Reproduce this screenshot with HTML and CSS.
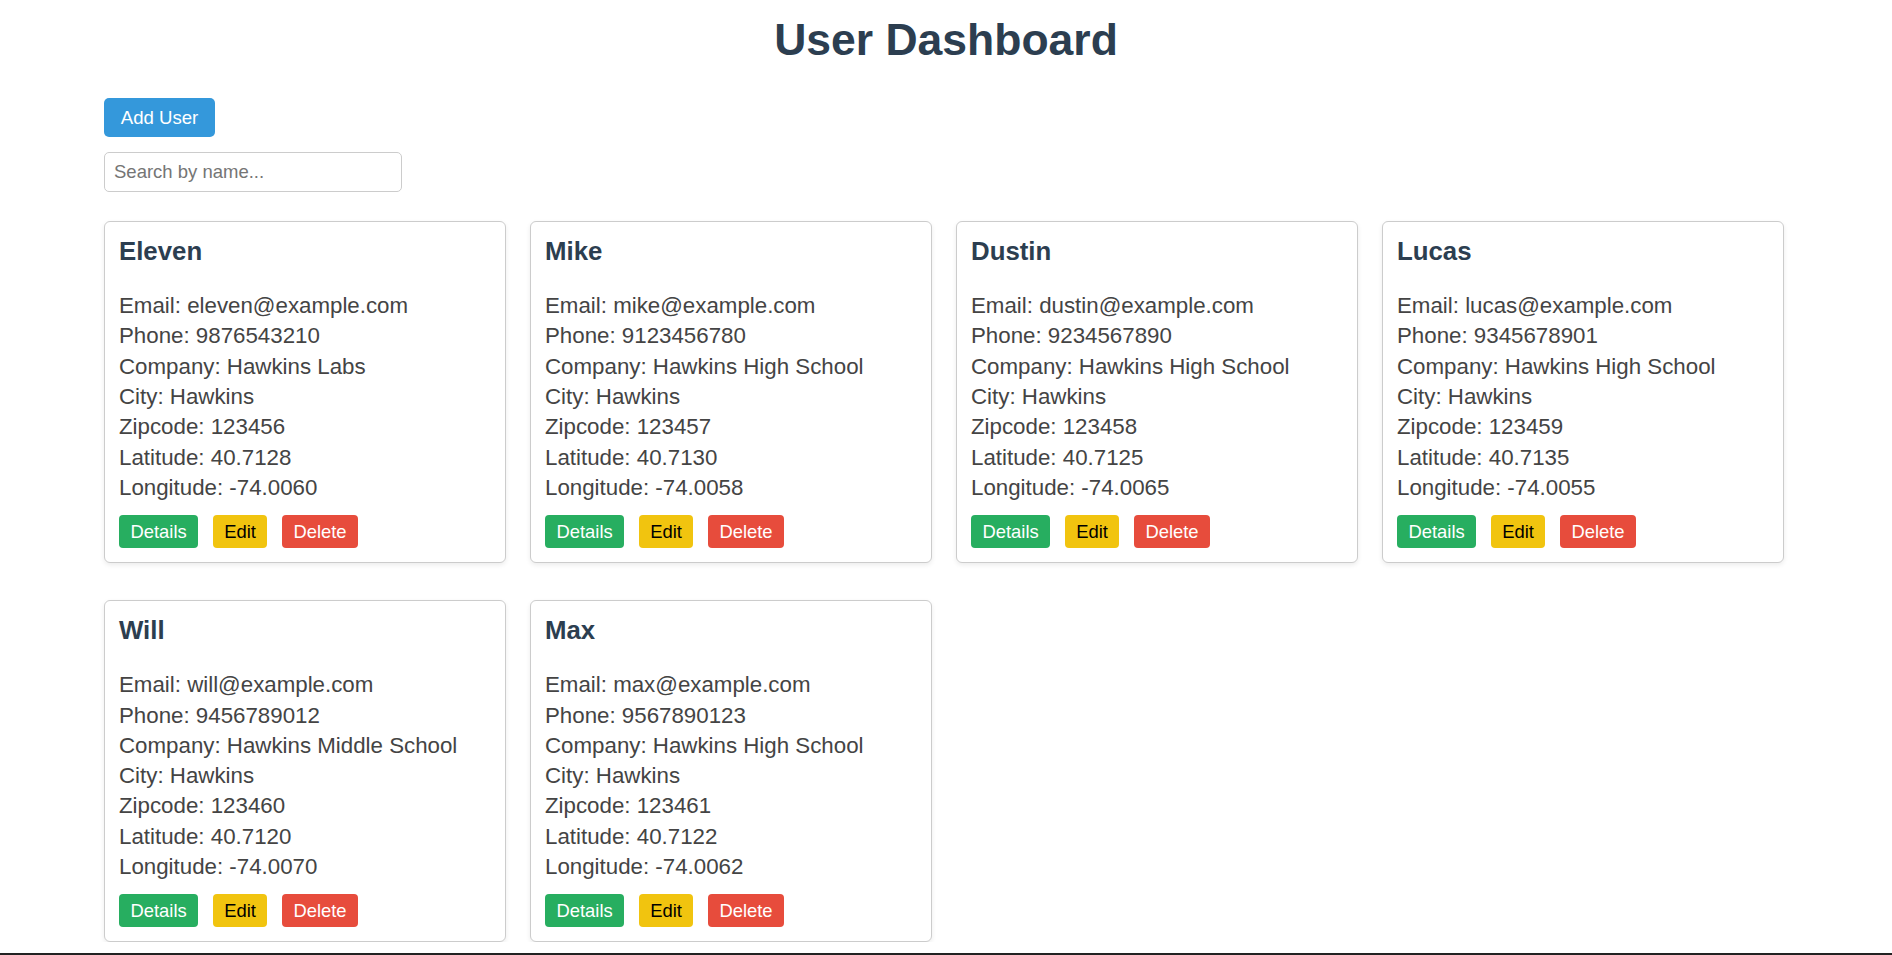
FILE: index.html
```html
<!DOCTYPE html>
<html lang="en">
<head>
<meta charset="utf-8">
<title>User Dashboard</title>
<link rel="stylesheet" href="styles.css">
</head>
<body>
<div class="page">
  <h1 class="title">User Dashboard</h1>
  <div class="toolbar">
    <button class="btn-add">Add User</button>
    <input class="search" type="text" placeholder="Search by name...">
  </div>
  <div class="cards">
    <div class="card">
      <h3 class="card-name">Eleven</h3>
      <div class="card-info">
        <p>Email: eleven@example.com</p>
        <p>Phone: 9876543210</p>
        <p>Company: Hawkins Labs</p>
        <p>City: Hawkins</p>
        <p>Zipcode: 123456</p>
        <p>Latitude: 40.7128</p>
        <p>Longitude: -74.0060</p>
      </div>
      <div class="actions">
        <button class="btn btn-details">Details</button>
        <button class="btn btn-edit">Edit</button>
        <button class="btn btn-delete">Delete</button>
      </div>
    </div>
    <div class="card">
      <h3 class="card-name">Mike</h3>
      <div class="card-info">
        <p>Email: mike@example.com</p>
        <p>Phone: 9123456780</p>
        <p>Company: Hawkins High School</p>
        <p>City: Hawkins</p>
        <p>Zipcode: 123457</p>
        <p>Latitude: 40.7130</p>
        <p>Longitude: -74.0058</p>
      </div>
      <div class="actions">
        <button class="btn btn-details">Details</button>
        <button class="btn btn-edit">Edit</button>
        <button class="btn btn-delete">Delete</button>
      </div>
    </div>
    <div class="card">
      <h3 class="card-name">Dustin</h3>
      <div class="card-info">
        <p>Email: dustin@example.com</p>
        <p>Phone: 9234567890</p>
        <p>Company: Hawkins High School</p>
        <p>City: Hawkins</p>
        <p>Zipcode: 123458</p>
        <p>Latitude: 40.7125</p>
        <p>Longitude: -74.0065</p>
      </div>
      <div class="actions">
        <button class="btn btn-details">Details</button>
        <button class="btn btn-edit">Edit</button>
        <button class="btn btn-delete">Delete</button>
      </div>
    </div>
    <div class="card">
      <h3 class="card-name">Lucas</h3>
      <div class="card-info">
        <p>Email: lucas@example.com</p>
        <p>Phone: 9345678901</p>
        <p>Company: Hawkins High School</p>
        <p>City: Hawkins</p>
        <p>Zipcode: 123459</p>
        <p>Latitude: 40.7135</p>
        <p>Longitude: -74.0055</p>
      </div>
      <div class="actions">
        <button class="btn btn-details">Details</button>
        <button class="btn btn-edit">Edit</button>
        <button class="btn btn-delete">Delete</button>
      </div>
    </div>
    <div class="card">
      <h3 class="card-name">Will</h3>
      <div class="card-info">
        <p>Email: will@example.com</p>
        <p>Phone: 9456789012</p>
        <p>Company: Hawkins Middle School</p>
        <p>City: Hawkins</p>
        <p>Zipcode: 123460</p>
        <p>Latitude: 40.7120</p>
        <p>Longitude: -74.0070</p>
      </div>
      <div class="actions">
        <button class="btn btn-details">Details</button>
        <button class="btn btn-edit">Edit</button>
        <button class="btn btn-delete">Delete</button>
      </div>
    </div>
    <div class="card">
      <h3 class="card-name">Max</h3>
      <div class="card-info">
        <p>Email: max@example.com</p>
        <p>Phone: 9567890123</p>
        <p>Company: Hawkins High School</p>
        <p>City: Hawkins</p>
        <p>Zipcode: 123461</p>
        <p>Latitude: 40.7122</p>
        <p>Longitude: -74.0062</p>
      </div>
      <div class="actions">
        <button class="btn btn-details">Details</button>
        <button class="btn btn-edit">Edit</button>
        <button class="btn btn-delete">Delete</button>
      </div>
    </div>
  </div>
</div>
<div class="bottom-edge"></div>
</body>
</html>
```

FILE: styles.css
```css
html, body {
  margin: 0;
  padding: 0;
  background: #ffffff;
}

body {
  font-family: "Liberation Sans", Arial, sans-serif;
  color: #444444;
}

.page {
  padding: 14px 104px 0;
}

.title {
  margin: 0;
  text-align: center;
  font-size: 44.5px;
  line-height: 51px;
  font-weight: bold;
  color: #2c3e50;
}

.toolbar {
  display: flex;
  flex-direction: column;
  align-items: flex-start;
  gap: 14.5px;
  margin-top: 33px;
}

.btn-add {
  font-family: "Liberation Sans", Arial, sans-serif;
  font-size: 18.6px;
  line-height: 21px;
  height: 39px;
  width: 111px;
  padding: 0;
  color: #ffffff;
  background: #3498db;
  border: none;
  border-radius: 5px;
}

.search {
  box-sizing: border-box;
  width: 298px;
  height: 40px;
  padding: 0 9px;
  font-family: "Liberation Sans", Arial, sans-serif;
  font-size: 18.5px;
  color: #333333;
  border: 1px solid #cccccc;
  border-radius: 5px;
  outline: none;
}

.search::placeholder {
  color: #757575;
}

.cards {
  display: flex;
  flex-wrap: wrap;
  column-gap: 24px;
  row-gap: 37px;
  margin-top: 29px;
}

.card {
  box-sizing: border-box;
  width: 402px;
  padding: 15px 15px 14px 14px;
  border: 1px solid #cccccc;
  border-radius: 6px;
  box-shadow: 0 2px 5px rgba(0, 0, 0, 0.08);
  background: #ffffff;
}

.card-name {
  margin: 0 0 25px;
  font-size: 25.8px;
  line-height: 29.6px;
  font-weight: bold;
  color: #2c3e50;
}

.card-info p {
  margin: 0;
  font-size: 22.3px;
  line-height: 30.3px;
  color: #444444;
}

.actions {
  display: flex;
  gap: 14.5px;
  margin-top: 11.5px;
}

.btn {
  font-family: "Liberation Sans", Arial, sans-serif;
  font-size: 18.4px;
  line-height: 21px;
  height: 33px;
  padding: 0 11.5px;
  border: none;
  border-radius: 4px;
}

.btn-details {
  background: #27ae60;
  color: #ffffff;
}

.btn-edit {
  background: #f1c40f;
  color: #000000;
}

.btn-delete {
  background: #e74c3c;
  color: #ffffff;
}

.bottom-edge {
  position: fixed;
  left: 0;
  right: 0;
  bottom: 0;
  height: 2px;
  background: #222222;
}
```
